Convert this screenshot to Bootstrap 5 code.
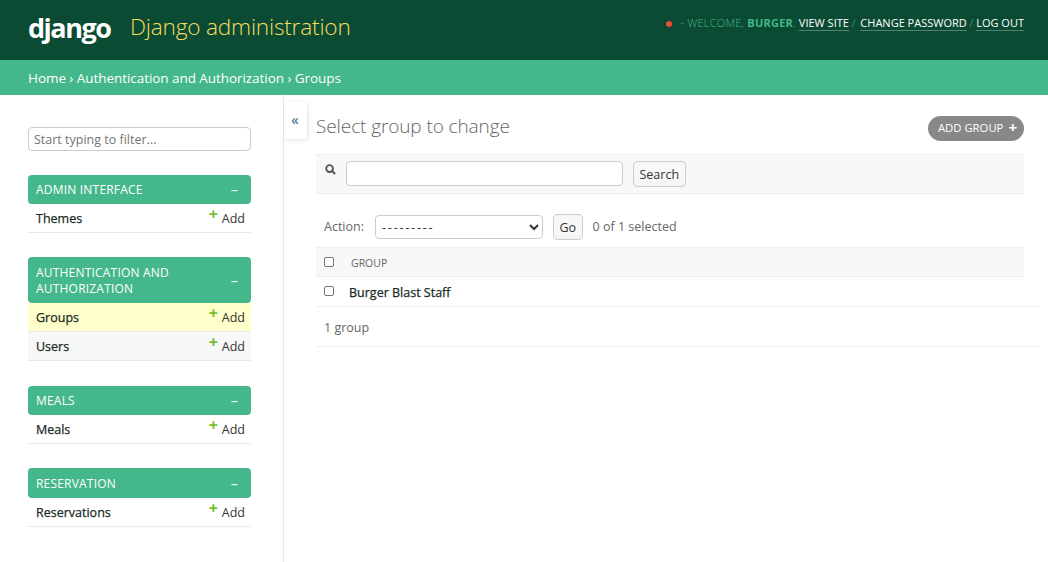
<!DOCTYPE html>
<html lang="en">
<head>
  <meta charset="UTF-8">
  <title>Select group to change | Django site admin</title>
  <meta name="viewport" content="width=device-width, initial-scale=1.0">
  <link href="https://cdn.jsdelivr.net/npm/bootstrap@5.3.3/dist/css/bootstrap.min.css" rel="stylesheet">
  <style>
    body { font-family: "Open Sans", "Liberation Sans", sans-serif; font-size: 13px; color: #333; height: 562px; overflow: hidden; }
    a { text-decoration: none; }

    .dj-header { height: 60px; background: #0c4b33; padding: 0 24px 5px 28px; }
    .dj-logo { font-weight: 700; font-size: 27px; letter-spacing: -1.5px; color: #fff; line-height: 1; width: 102px; }
    .dj-title { font-size: 22.7px; font-weight: 300; color: #f5dd5d; letter-spacing: -.22px; }
    .dj-tools { font-size: 11px; font-weight: 300; color: #44b78b; padding-top: 15px; align-self: flex-start; }
    .dj-tools a { color: #fff; font-weight: 400; border-bottom: 1px solid rgba(255,255,255,.3); }
    .dj-tools strong { font-weight: 700; }
    .dj-hello { letter-spacing: .25px; }
    .dj-sep { margin-right: 2px; }
    .dj-dot { width: 6px; height: 6px; background: #e74c3c; border-radius: 50%; display: inline-block; margin-right: 9px; }
    .dj-crumbs { height: 35px; background: #44b78b; color: #fff; padding: 0 28px; font-size: 13.5px; line-height: 36px; letter-spacing: -.06px; }
    .dj-crumbs a { color: #fff; }

    .dj-side { width: 284px; height: 467px; flex: none; border-right: 1px solid #eaeaea; padding: 32px 32px 0 28px; }
    .dj-filter { height: 24px; width: 223px; border: 1px solid #ccc; border-radius: 4px; font-size: 12.5px; padding: 0 5px; display: block; margin-bottom: 24px; }
    .dj-filter::placeholder { color: #757575; }
    .dj-mod { width: 223px; margin-bottom: 24px; }
    .dj-mod.tall { margin-bottom: 25px; }
    .dj-cap { background: #44b78b; color: #fff; font-size: 12px; line-height: 16px; padding: 7px 13px 6px 8px; border-radius: 4px; text-transform: uppercase; letter-spacing: .2px; }
    .dj-mod.tall .dj-cap, .dj-mod:last-child .dj-cap { padding-top: 8px; }
    .dj-cap span:last-child { font-size: 14px; }
    .dj-row { height: 29px; padding: 3px 6px 0 8px; border-bottom: 1px solid #eaeaea; font-size: 12.5px; }
    .dj-row a { color: #333; }
    .dj-row a:last-child { margin-top: -2px; }
    .dj-row .dj-name { color: #1a2b25; -webkit-text-stroke: .25px #1a2b25; }
    .dj-row.cur { background: #ffc; }
    .dj-row.alt { background: #f8f8f8; }
    .dj-plus { color: #70bf2b; font-weight: 700; font-size: 16px; line-height: 1; position: relative; top: -3px; margin-right: 4px; }

    .dj-toggle { width: 23px; height: 37px; background: #fff; flex: none; margin-top: 7px; border-radius: 0 4px 4px 0; box-shadow: 1px 1px 4px rgba(0,0,0,.12); font-size: 15px; color: #2f6079; text-align: center; line-height: 35px; padding-right: 1px; }
    .dj-main { width: 734px; margin-left: 9px; flex: none; }
    .dj-head { width: 708px; margin-top: 4px; }
    .dj-h1 { font-size: 19px; font-weight: 300; color: #666; margin: 0 0 4px; letter-spacing: -.1px; }
    .dj-add { background: #888; color: #fff; font-size: 11.3px; border-radius: 15px; height: 25px; padding: 0 7px 0 10px; text-transform: uppercase; }
    .dj-add b { font-size: 15px; margin-left: 5px; line-height: 1; position: relative; top: -1px; }
    .dj-toolbar { width: 708px; height: 40px; background: #f8f8f8; border-top: 1px solid #eee; border-bottom: 1px solid #eee; padding-left: 9px; margin-top: 12px; }
    .dj-search { width: 277px; height: 25px; border: 1px solid #ccc; border-radius: 4px; margin: 0 10px 0 10px; }
    .dj-btn { background: #f8f8f8; border: 1px solid #ccc; border-radius: 4px; font-size: 12.5px; color: #333; height: 26px; padding: 3px 5.5px 0; box-shadow: 0 -10px 10px -10px #eee inset; }
    .dj-actions { height: 53px; padding: 14px 0 0 8px; width: 708px; font-size: 12.5px; color: #666; }
    .dj-actions span { padding-top: 1px; }
    .dj-actions select { width: 168px; height: 24px; border: 1px solid #ccc; border-radius: 4px; background: #fff; margin: 0 10px 0 11px; font-size: 12.5px; padding-left: 2px; color: #333; letter-spacing: 1.8px; }
    .dj-count { margin-left: 10px; }
    .dj-th { width: 708px; height: 30px; background: #f8f8f8; border-top: 1px solid #eee; border-bottom: 1px solid #eee; padding: 4px 0 0 8px; font-size: 10.5px; color: #666; text-transform: uppercase; }
    .dj-td { width: 724px; height: 30px; border-bottom: 1px solid #eee; padding: 4px 0 0 8px; font-size: 12.5px; }
    .dj-td a { color: #1a2b25; -webkit-text-stroke: .25px #1a2b25; }
    .dj-chk { width: 10px; height: 10px; border: 1px solid #767676; border-radius: 2px; background: #fff; flex: none; position: relative; top: -2px; margin-right: 17px; }
    .dj-td .dj-chk { margin-right: 15px; }
    .dj-pag { width: 724px; height: 40px; border-bottom: 1px solid #eee; padding: 4px 0 0 8px; color: #666; font-size: 12.5px; }
  </style>
</head>
<body>

  <!-- Header -->
  <div class="dj-header d-flex align-items-center">
    <div class="dj-logo">django</div>
    <div class="dj-title">Django administration</div>
    <div class="dj-tools ms-auto"><span class="dj-dot"></span><span class="dj-hello">- WELCOME, <strong>BURGER</strong>.</span> <a href="#">VIEW SITE</a> <span class="dj-sep">/</span> <a href="#">CHANGE PASSWORD</a> / <a href="#">LOG OUT</a></div>
  </div>
  <div class="dj-crumbs"><a href="#">Home</a> › <a href="#">Authentication and Authorization</a> › Groups</div>

  <div class="d-flex">
    <!-- Sidebar -->
    <div class="dj-side">
      <input class="dj-filter" type="text" placeholder="Start typing to filter...">

      <div class="dj-mod">
        <div class="dj-cap d-flex justify-content-between align-items-center"><span>Admin Interface</span><span>–</span></div>
        <div class="dj-row d-flex justify-content-between align-items-center"><a class="dj-name" href="#">Themes</a><a href="#"><span class="dj-plus">+</span>Add</a></div>
      </div>

      <div class="dj-mod tall">
        <div class="dj-cap d-flex justify-content-between align-items-center"><span>Authentication and Authorization</span><span>–</span></div>
        <div class="dj-row cur d-flex justify-content-between align-items-center"><a class="dj-name" href="#">Groups</a><a href="#"><span class="dj-plus">+</span>Add</a></div>
        <div class="dj-row alt d-flex justify-content-between align-items-center"><a class="dj-name" href="#">Users</a><a href="#"><span class="dj-plus">+</span>Add</a></div>
      </div>

      <div class="dj-mod">
        <div class="dj-cap d-flex justify-content-between align-items-center"><span>Meals</span><span>–</span></div>
        <div class="dj-row d-flex justify-content-between align-items-center"><a class="dj-name" href="#">Meals</a><a href="#"><span class="dj-plus">+</span>Add</a></div>
      </div>

      <div class="dj-mod">
        <div class="dj-cap d-flex justify-content-between align-items-center"><span>Reservation</span><span>–</span></div>
        <div class="dj-row d-flex justify-content-between align-items-center"><a class="dj-name" href="#">Reservations</a><a href="#"><span class="dj-plus">+</span>Add</a></div>
      </div>
    </div>

    <div class="dj-toggle">«</div>

    <!-- Content -->
    <div class="dj-main pt-3">
      <div class="dj-head d-flex justify-content-between align-items-center">
        <h1 class="dj-h1">Select group to change</h1>
        <a class="dj-add d-flex align-items-center" href="#">Add group<b>+</b></a>
      </div>

      <div class="dj-toolbar d-flex align-items-center">
        <svg width="11" height="11" viewBox="0 0 12 12" class="mb-2"><circle cx="5" cy="5" r="3.7" fill="none" stroke="#555" stroke-width="2"/><path d="M8 8l3 3" stroke="#555" stroke-width="2.2"/></svg>
        <input class="dj-search" type="text">
        <button class="dj-btn">Search</button>
      </div>

      <div class="dj-actions d-flex align-items-center">
        <span>Action:</span>
        <select><option>---------</option></select>
        <button class="dj-btn">Go</button>
        <span class="dj-count">0 of 1 selected</span>
      </div>

      <div class="dj-th d-flex align-items-center"><span class="dj-chk"></span><span>Group</span></div>
      <div class="dj-td d-flex align-items-center"><span class="dj-chk"></span><a href="#">Burger Blast Staff</a></div>
      <div class="dj-pag d-flex align-items-center">1 group</div>
    </div>
  </div>

</body>
</html>
